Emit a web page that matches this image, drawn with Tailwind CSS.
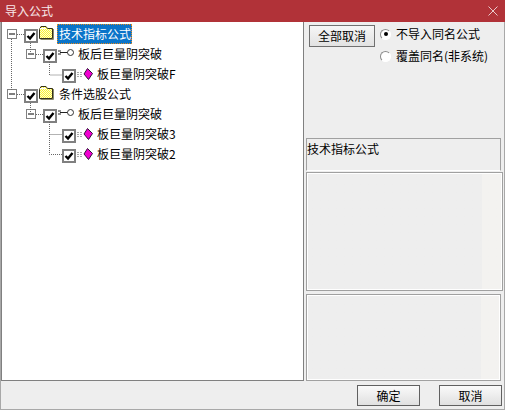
<!DOCTYPE html>
<html lang="zh-CN">

<head>
    <meta charset="UTF-8" />
    <title>导入公式</title>
    <script src="https://cdn.jsdelivr.net/npm/@tailwindcss/browser@4"></script>
</head>

<body class="w-[505px] h-[410px] overflow-hidden bg-[#eeeeee] text-[12px] leading-[16px] text-black font-['Noto_Sans_CJK_SC','Liberation_Sans',sans-serif]">
    <div class="w-full h-full flex flex-col border-x border-b border-[#a8a8a8]">
        <!-- title bar -->
        <div class="h-[22px] -mx-px shrink-0 bg-[#b13238] text-white/90 flex items-center justify-between pl-[5px] pr-[6px]">
            <span>导入公式</span>
            <svg width="10" height="10" viewBox="0 0 10 10" class="mr-[1px]">
                <path d="M0.5 0.5L9.5 9.5M9.5 0.5L0.5 9.5" stroke="#e9c9cb" stroke-width="1" fill="none" />
            </svg>
        </div>

        <div class="flex h-[359px] shrink-0 pr-[1px]">
            <!-- tree -->
            <div class="relative w-[303px] h-full shrink-0 bg-white border-x border-b border-[#808080] pt-[2px]">
                <svg class="absolute left-0 top-0" width="120" height="150" fill="none" stroke="#666666" stroke-dasharray="1 1">
                    <path d="M9.500 17V68M15 12.500H22M28.500 21V30M34 32.500H41M47.500 40V53H60M15 72.500H22M28.500 81V90M34 92.500H41M47.500 100V132.500H60M47.500 112.500H60" />
                </svg>

                <div class="h-5 flex items-center pl-[5px]">
                    <svg width="10" height="10" class="mr-[7px]"><rect x="0.500" y="0.500" width="9" height="9" fill="#fff" stroke="#808080" /><path d="M2 5H8" stroke="#000" /></svg>
                    <span class="relative w-[14px] h-[14px] mt-[4px] border-[2px] border-[#808080] bg-white flex items-center justify-center"><svg width="10" height="10"><path d="M1.500 5L4 7.500L8.500 2" stroke="#000" stroke-width="2.400" fill="none" /></svg></span>
                    <svg width="16" height="15" class="mr-[3px] mb-[4px]" viewBox="0 0 16 15"><defs><pattern id="dither" width="2" height="2" patternUnits="userSpaceOnUse"><rect width="2" height="2" fill="#f7ef3a" /><rect width="1" height="1" fill="#ffffd0" /><rect x="1" y="1" width="1" height="1" fill="#ffffd0" /></pattern></defs><path d="M1.500 4.500L3 1.500H8L9.500 3.500H14.500V13.500H1.500Z" fill="url(#dither)" stroke="#33301a" /><path d="M2 3.500H8" stroke="#fff" /><path d="M15.500 4V14.500H2.500" stroke="#8a8a70" fill="none" /></svg>
                    <span class="h-5 pl-[2px] pr-[1px] flex items-center bg-[#0a74c9] text-white outline-1 -outline-offset-1 outline-dotted outline-[#e88a1a]">技术指标公式</span>
                </div>
                <div class="h-5 flex items-center pl-[24px]">
                    <svg width="10" height="10" class="mr-[7px]"><rect x="0.500" y="0.500" width="9" height="9" fill="#fff" stroke="#808080" /><path d="M2 5H8" stroke="#000" /></svg>
                    <span class="w-[14px] h-[14px] mt-[4px] mr-[1px] border-[2px] border-[#808080] bg-white flex items-center justify-center"><svg width="10" height="10"><path d="M1.500 5L4 7.500L8.500 2" stroke="#000" stroke-width="2.400" fill="none" /></svg></span>
                    <svg width="16" height="10" class="mr-[4px] mb-[2px]"><path d="M0 3H3M0 6H3M2 4.500H10" stroke="#222" fill="none" /><circle cx="12.500" cy="4.500" r="3" fill="#fff" stroke="#333" /></svg>
                    <span>板后巨量阴突破</span>
                </div>
                <div class="h-5 flex items-center pl-[60px]">
                    <span class="w-[14px] h-[14px] mt-[4px] mr-[1px] border-[2px] border-[#808080] bg-white flex items-center justify-center"><svg width="10" height="10"><path d="M1.500 5L4 7.500L8.500 2" stroke="#000" stroke-width="2.400" fill="none" /></svg></span>
                    <svg width="16" height="12" class="mr-[4px]"><path d="M0 4.500H6M0 6.500H6M0 8.500H6" stroke="#a8a8a8" stroke-dasharray="2 1" /><path d="M10.500 0.500L15.500 5.500L11.500 11.500L7 6Z" fill="#f000d0" stroke="#30103a" /></svg>
                    <span>板巨量阴突破F</span>
                </div>

                <div class="h-5 flex items-center pl-[5px]">
                    <svg width="10" height="10" class="mr-[7px]"><rect x="0.500" y="0.500" width="9" height="9" fill="#fff" stroke="#808080" /><path d="M2 5H8" stroke="#000" /></svg>
                    <span class="w-[14px] h-[14px] mt-[4px] border-[2px] border-[#808080] bg-white flex items-center justify-center"><svg width="10" height="10"><path d="M1.500 5L4 7.500L8.500 2" stroke="#000" stroke-width="2.400" fill="none" /></svg></span>
                    <svg width="16" height="15" class="mr-[5px] mb-[4px]" viewBox="0 0 16 15"><path d="M1.500 4.500L3 1.500H8L9.500 3.500H14.500V13.500H1.500Z" fill="url(#dither)" stroke="#33301a" /><path d="M2 3.500H8" stroke="#fff" /><path d="M15.500 4V14.500H2.500" stroke="#8a8a70" fill="none" /></svg>
                    <span>条件选股公式</span>
                </div>
                <div class="h-5 flex items-center pl-[24px]">
                    <svg width="10" height="10" class="mr-[7px]"><rect x="0.500" y="0.500" width="9" height="9" fill="#fff" stroke="#808080" /><path d="M2 5H8" stroke="#000" /></svg>
                    <span class="w-[14px] h-[14px] mt-[4px] mr-[1px] border-[2px] border-[#808080] bg-white flex items-center justify-center"><svg width="10" height="10"><path d="M1.500 5L4 7.500L8.500 2" stroke="#000" stroke-width="2.400" fill="none" /></svg></span>
                    <svg width="16" height="10" class="mr-[4px] mb-[2px]"><path d="M0 3H3M0 6H3M2 4.500H10" stroke="#222" fill="none" /><circle cx="12.500" cy="4.500" r="3" fill="#fff" stroke="#333" /></svg>
                    <span>板后巨量阴突破</span>
                </div>
                <div class="h-5 flex items-center pl-[60px]">
                    <span class="w-[14px] h-[14px] mt-[4px] mr-[1px] border-[2px] border-[#808080] bg-white flex items-center justify-center"><svg width="10" height="10"><path d="M1.500 5L4 7.500L8.500 2" stroke="#000" stroke-width="2.400" fill="none" /></svg></span>
                    <svg width="16" height="12" class="mr-[4px]"><path d="M0 4.500H6M0 6.500H6M0 8.500H6" stroke="#a8a8a8" stroke-dasharray="2 1" /><path d="M10.500 0.500L15.500 5.500L11.500 11.500L7 6Z" fill="#f000d0" stroke="#30103a" /></svg>
                    <span>板巨量阴突破3</span>
                </div>
                <div class="h-5 flex items-center pl-[60px]">
                    <span class="w-[14px] h-[14px] mt-[4px] mr-[1px] border-[2px] border-[#808080] bg-white flex items-center justify-center"><svg width="10" height="10"><path d="M1.500 5L4 7.500L8.500 2" stroke="#000" stroke-width="2.400" fill="none" /></svg></span>
                    <svg width="16" height="12" class="mr-[4px]"><path d="M0 4.500H6M0 6.500H6M0 8.500H6" stroke="#a8a8a8" stroke-dasharray="2 1" /><path d="M10.500 0.500L15.500 5.500L11.500 11.500L7 6Z" fill="#f000d0" stroke="#30103a" /></svg>
                    <span>板巨量阴突破2</span>
                </div>
            </div>

            <!-- right side -->
            <div class="flex-1 flex flex-col pl-[2px] min-w-0">
                <div class="h-[116px] shrink-0 flex items-start pt-[3px] pl-[3px]">
                    <button class="w-[66px] h-[22px] border border-[#707070] bg-gradient-to-b from-[#f6f6f6] to-[#e2e2e2] flex items-center justify-center">全部取消</button>
                    <div class="ml-[5px] flex flex-col gap-[6px] pt-[1px]">
                        <label class="flex items-center h-[16px]">
                            <span class="w-[11px] h-[11px] rounded-full border border-[#8a8a8a] border-r-white border-b-white bg-white flex items-center justify-center mr-[5px]"><span class="w-[4px] h-[4px] rounded-full bg-black"></span></span>
                            不导入同名公式
                        </label>
                        <label class="flex items-center h-[16px]">
                            <span class="w-[11px] h-[11px] rounded-full border border-[#8a8a8a] border-r-white border-b-white bg-white mr-[5px]"></span>
                            覆盖同名(非系统)
                        </label>
                    </div>
                </div>
                <div class="h-[33px] w-[195px] shrink-0 border-t border-x border-[#a0a0a0] border-b border-b-white bg-[#eeeeee] leading-[18px] pt-[1px]">技术指标公式</div>
                <div class="h-[119px] w-[197px] shrink-0 mt-[1px] border border-[#a0a0a0] outline outline-white -outline-offset-2 bg-gradient-to-r from-[#eeeeee] from-[90%] to-[#f3f2f0] to-[90%]"></div>
                <div class="h-[87px] w-[195px] shrink-0 mt-[3px] border border-[#a0a0a0] outline outline-white -outline-offset-2 bg-gradient-to-r from-[#eeeeee] from-[90%] to-[#f3f2f0] to-[90%]"></div>
            </div>
        </div>

        <!-- bottom buttons -->
        <div class="flex justify-end gap-[19px] pt-[4px] pr-[2px]">
            <button class="w-[63px] h-[21px] border-[1px] border-[#606060] bg-gradient-to-b from-[#fafafa] to-[#e0e0e0] flex items-center justify-center">确定</button>
            <button class="w-[63px] h-[21px] border-[1px] border-[#606060] bg-gradient-to-b from-[#fafafa] to-[#e0e0e0] flex items-center justify-center">取消</button>
        </div>
    </div>
</body>

</html>
